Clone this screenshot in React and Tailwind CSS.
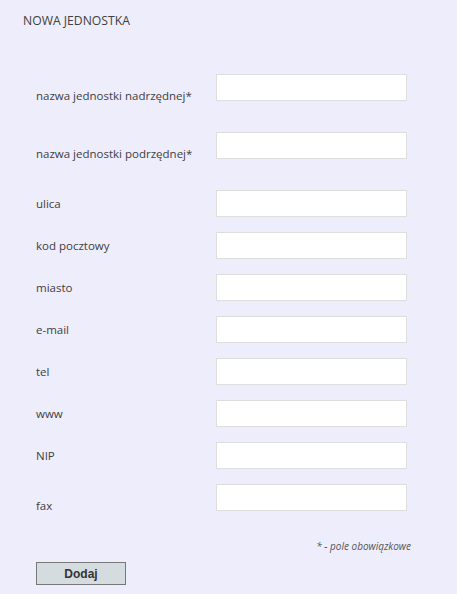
import React from "react";

const fields = [
  { label: "nazwa jednostki nadrzędnej*", gap: "mt-0", low: true },
  { label: "nazwa jednostki podrzędnej*", gap: "mt-[31px]", low: true },
  { label: "ulica", gap: "mt-[31px]" },
  { label: "kod pocztowy", gap: "mt-[15px]" },
  { label: "miasto", gap: "mt-[15px]" },
  { label: "e-mail", gap: "mt-[15px]" },
  { label: "tel", gap: "mt-[15px]" },
  { label: "www", gap: "mt-[15px]" },
  { label: "NIP", gap: "mt-[15px]" },
  { label: "fax", gap: "mt-[15px]", low: true },
];

export default function App() {
  return (
    <div
      className="w-[457px] h-[594px] bg-[#eeedfc] text-[#404040] overflow-hidden"
      style={{ fontFamily: '"Open Sans", "Noto Sans", sans-serif' }}
    >
      <h1 className="pl-[23px] pt-[12px] text-[12.2px] leading-[17px] font-normal">
        NOWA JEDNOSTKA
      </h1>

      <form className="pl-[36px] pt-[45px]">
        {fields.map((f) => (
          <div key={f.label} className={`flex h-[27px] ${f.gap}`}>
            <label
              className={`w-[180px] text-[11.5px] leading-[27px] ${
                f.low ? "mt-[8px]" : "mt-0"
              }`}
            >
              {f.label}
            </label>
            <input
              type="text"
              className="w-[191px] h-[27px] bg-white border border-[#dedede] outline-none"
            />
          </div>
        ))}

        <div className="w-[375px] mt-[29px] text-right text-[10px] italic leading-[12px] text-[#555]">
          * - pole obowiązkowe
        </div>

        <button
          type="button"
          className="mt-[10px] w-[90px] h-[23px] bg-[#d4dce0] border border-[#777] text-[12px] font-bold text-[#333]"
          style={{ fontFamily: '"Liberation Sans", Arial, sans-serif' }}
        >
          Dodaj
        </button>
      </form>
    </div>
  );
}
